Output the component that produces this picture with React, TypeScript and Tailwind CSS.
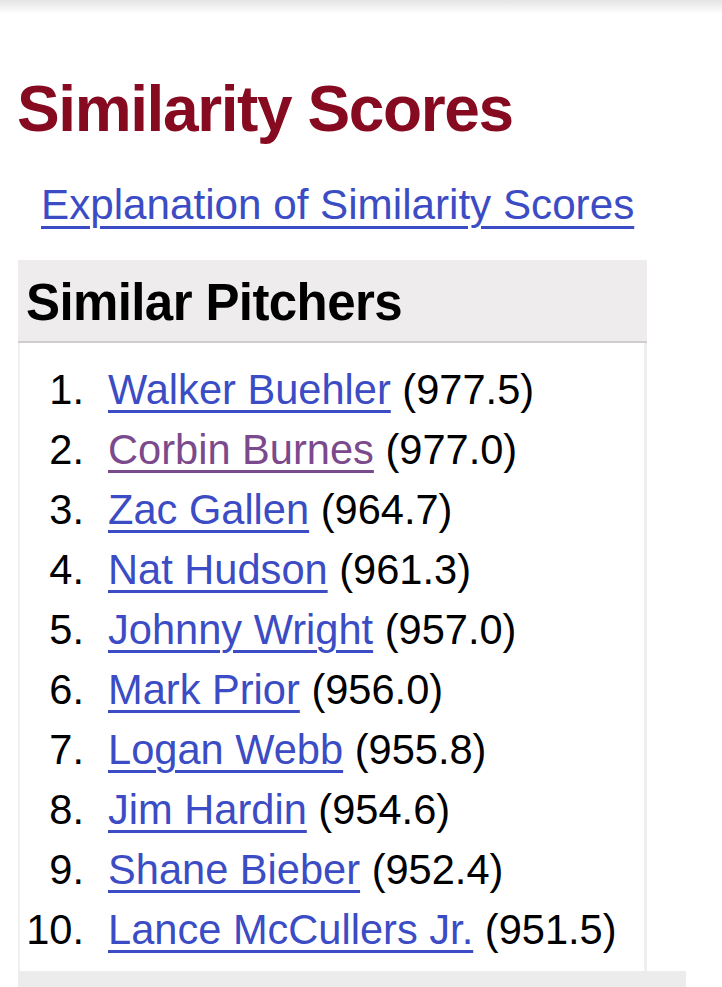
import React from "react";

const rows: { n: number; name: string; score: string; visited?: boolean }[] = [
  { n: 1, name: "Walker Buehler", score: "(977.5)" },
  { n: 2, name: "Corbin Burnes", score: "(977.0)", visited: true },
  { n: 3, name: "Zac Gallen", score: "(964.7)" },
  { n: 4, name: "Nat Hudson", score: "(961.3)" },
  { n: 5, name: "Johnny Wright", score: "(957.0)" },
  { n: 6, name: "Mark Prior", score: "(956.0)" },
  { n: 7, name: "Logan Webb", score: "(955.8)" },
  { n: 8, name: "Jim Hardin", score: "(954.6)" },
  { n: 9, name: "Shane Bieber", score: "(952.4)" },
  { n: 10, name: "Lance McCullers Jr.", score: "(951.5)" },
];

export default function App() {
  return (
    <div
      className="min-h-[987px] w-[722px] overflow-hidden bg-white text-black"
      style={{ fontFamily: '"Liberation Sans", Arial, Helvetica, sans-serif' }}
    >
      <div className="h-[14px] bg-gradient-to-b from-[#e4e4e4] to-white" />
      <div className="pl-[17px]">
        <h2 className="mt-[63px] text-[64px] leading-[64px] font-bold tracking-[-1.4px] text-[#870b20]">
          Similarity Scores
        </h2>
        <div className="mt-[43px] ml-[24px] text-[42.2px] leading-[42px]">
          <a href="#" className="text-[#3b4cc4] underline decoration-[3px] underline-offset-[7px]">
            Explanation of Similarity Scores
          </a>
        </div>
      </div>
      <div className="mt-[34px] ml-[18px] w-[629px]">
        <div className="h-[83px] bg-[#eeeced] pt-[17px] pl-[8px] border-b-2 border-[#cfcdcd]">
          <div className="text-[51px] leading-[51px] font-bold tracking-[-0.6px]">Similar Pitchers</div>
        </div>
        <div className="border-l-2 border-r-[3px] border-[#efefef] bg-white pt-[17px] pb-[11px]">
          {rows.map((r) => (
            <div key={r.n} className="flex h-[60px] items-start text-[41.6px] leading-[60px]">
              <span className="w-[64px] shrink-0 text-right">{r.n}.</span>
              <span className="ml-[24px] whitespace-nowrap">
                <a
                  href="#"
                  className={
                    (r.visited ? "text-[#7b4a8c]" : "text-[#3b4cc4]") +
                    " underline decoration-[3px] underline-offset-[6px]"
                  }
                >
                  {r.name}
                </a>{" "}
                {r.score}
              </span>
            </div>
          ))}
        </div>
      </div>
      <div className="ml-[18px] w-[668px] h-[30px] bg-[#ececec]" />
    </div>
  );
}
